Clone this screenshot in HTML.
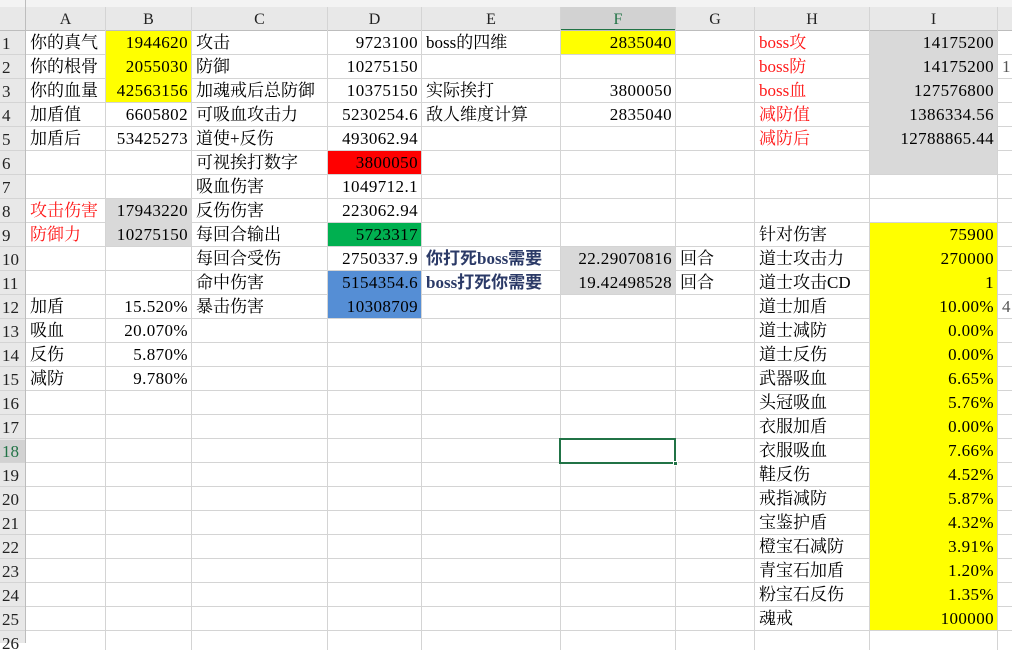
<!DOCTYPE html>
<html><head><meta charset="utf-8"><style>
body{margin:0;width:1012px;height:643px;overflow:hidden;background:#fff;position:relative;font-family:"Liberation Serif","Noto Serif CJK SC",serif;font-size:17px;color:#000}
div{position:absolute;box-sizing:border-box}
.h{background:#d4d4d4;height:1px;left:0;width:1012px}
.v{background:#d4d4d4;width:1px;top:7px;height:643px}
.c{height:23px;line-height:24px;padding:0 4px;white-space:nowrap}
.r{text-align:right;letter-spacing:0.4px;padding-right:3px}
.red{color:#ff1a1a}
.b{font-weight:bold;color:#2b3a67;font-family:"Liberation Serif","Noto Sans CJK SC",serif}
.ch{top:7px;height:23px;line-height:26px;text-align:center;font-size:16px;color:#222}
.rn{left:0;width:25px;height:24px;line-height:26px;padding-left:2px;font-size:17px;color:#222}
</style></head><body>
<div style="left:0;top:0;width:1012px;height:7px;background:#f3f3f3"></div>
<div style="left:0;top:7px;width:1012px;height:24px;background:#e8e8e8"></div>
<div style="left:0;top:7px;width:25px;height:636px;background:#e8e8e8"></div>
<div style="left:560px;top:7px;width:115px;height:24px;background:#d2d2d2;border-bottom:2px solid #217346"></div>
<div style="left:0;top:440px;width:25px;height:23px;background:#d2d2d2"></div>
<!-- grid -->
<div class="h" style="top:30px;background:#bdbdbd"></div>
<div class="h" style="top:54px"></div><div class="h" style="top:78px"></div><div class="h" style="top:102px"></div><div class="h" style="top:126px"></div><div class="h" style="top:150px"></div><div class="h" style="top:174px"></div><div class="h" style="top:198px"></div><div class="h" style="top:222px"></div><div class="h" style="top:246px"></div><div class="h" style="top:270px"></div><div class="h" style="top:294px"></div><div class="h" style="top:318px"></div><div class="h" style="top:342px"></div><div class="h" style="top:366px"></div><div class="h" style="top:390px"></div><div class="h" style="top:414px"></div><div class="h" style="top:438px"></div><div class="h" style="top:462px"></div><div class="h" style="top:486px"></div><div class="h" style="top:510px"></div><div class="h" style="top:534px"></div><div class="h" style="top:558px"></div><div class="h" style="top:582px"></div><div class="h" style="top:606px"></div><div class="h" style="top:630px"></div>
<div class="v" style="left:25px;background:#bdbdbd;top:0"></div>
<div class="v" style="left:105px"></div><div class="v" style="left:191px"></div><div class="v" style="left:327px"></div><div class="v" style="left:421px"></div><div class="v" style="left:560px"></div><div class="v" style="left:675px"></div><div class="v" style="left:754px"></div><div class="v" style="left:869px"></div><div class="v" style="left:997px"></div>
<!-- fills -->
<div style="left:106px;top:31px;width:85px;height:71px;background:#ffff00"></div>
<div style="left:561px;top:31px;width:114px;height:23px;background:#ffff00"></div>
<div style="left:870px;top:31px;width:127px;height:143px;background:#d9d9d9"></div>
<div style="left:106px;top:199px;width:85px;height:47px;background:#d9d9d9"></div>
<div style="left:328px;top:151px;width:93px;height:23px;background:#ff0000"></div>
<div style="left:328px;top:223px;width:93px;height:23px;background:#00b050"></div>
<div style="left:328px;top:271px;width:93px;height:47px;background:#558ed5"></div>
<div style="left:561px;top:247px;width:114px;height:47px;background:#d9d9d9"></div>
<div style="left:870px;top:223px;width:127px;height:407px;background:#ffff00"></div>
<!-- headers -->
<div class="ch" style="left:26px;width:79px">A</div><div class="ch" style="left:106px;width:85px">B</div><div class="ch" style="left:192px;width:135px">C</div><div class="ch" style="left:328px;width:93px">D</div><div class="ch" style="left:422px;width:138px">E</div><div class="ch" style="left:561px;width:114px;color:#217346">F</div><div class="ch" style="left:676px;width:78px">G</div><div class="ch" style="left:755px;width:114px">H</div><div class="ch" style="left:870px;width:127px">I</div>
<div class="rn" style="top:31px">1</div><div class="rn" style="top:55px">2</div><div class="rn" style="top:79px">3</div><div class="rn" style="top:103px">4</div><div class="rn" style="top:127px">5</div><div class="rn" style="top:151px">6</div><div class="rn" style="top:175px">7</div><div class="rn" style="top:199px">8</div><div class="rn" style="top:223px">9</div><div class="rn" style="top:247px">10</div><div class="rn" style="top:271px">11</div><div class="rn" style="top:295px">12</div><div class="rn" style="top:319px">13</div><div class="rn" style="top:343px">14</div><div class="rn" style="top:367px">15</div><div class="rn" style="top:391px">16</div><div class="rn" style="top:415px">17</div><div class="rn" style="top:439px;color:#217346">18</div><div class="rn" style="top:463px">19</div><div class="rn" style="top:487px">20</div><div class="rn" style="top:511px">21</div><div class="rn" style="top:535px">22</div><div class="rn" style="top:559px">23</div><div class="rn" style="top:583px">24</div><div class="rn" style="top:607px">25</div><div class="rn" style="top:631px">26</div>
<!-- A -->
<div class="c" style="left:26px;top:31px">你的真气</div><div class="c" style="left:26px;top:55px">你的根骨</div><div class="c" style="left:26px;top:79px">你的血量</div><div class="c" style="left:26px;top:103px">加盾值</div><div class="c" style="left:26px;top:127px">加盾后</div><div class="c red" style="left:26px;top:199px">攻击伤害</div><div class="c red" style="left:26px;top:223px">防御力</div><div class="c" style="left:26px;top:295px">加盾</div><div class="c" style="left:26px;top:319px">吸血</div><div class="c" style="left:26px;top:343px">反伤</div><div class="c" style="left:26px;top:367px">减防</div>
<!-- B -->
<div class="c r" style="left:106px;width:85px;top:31px">1944620</div><div class="c r" style="left:106px;width:85px;top:55px">2055030</div><div class="c r" style="left:96px;width:95px;top:79px">42563156</div><div class="c r" style="left:106px;width:85px;top:103px">6605802</div><div class="c r" style="left:96px;width:95px;top:127px">53425273</div><div class="c r" style="left:96px;width:95px;top:199px">17943220</div><div class="c r" style="left:96px;width:95px;top:223px">10275150</div><div class="c r" style="left:106px;width:85px;top:295px">15.520%</div><div class="c r" style="left:106px;width:85px;top:319px">20.070%</div><div class="c r" style="left:106px;width:85px;top:343px">5.870%</div><div class="c r" style="left:106px;width:85px;top:367px">9.780%</div>
<!-- C -->
<div class="c" style="left:192px;top:31px">攻击</div><div class="c" style="left:192px;top:55px">防御</div><div class="c" style="left:192px;top:79px">加魂戒后总防御</div><div class="c" style="left:192px;top:103px">可吸血攻击力</div><div class="c" style="left:192px;top:127px">道使+反伤</div><div class="c" style="left:192px;top:151px">可视挨打数字</div><div class="c" style="left:192px;top:175px">吸血伤害</div><div class="c" style="left:192px;top:199px">反伤伤害</div><div class="c" style="left:192px;top:223px">每回合输出</div><div class="c" style="left:192px;top:247px">每回合受伤</div><div class="c" style="left:192px;top:271px">命中伤害</div><div class="c" style="left:192px;top:295px">暴击伤害</div>
<!-- D -->
<div class="c r" style="left:328px;width:93px;top:31px">9723100</div><div class="c r" style="left:328px;width:93px;top:55px">10275150</div><div class="c r" style="left:328px;width:93px;top:79px">10375150</div><div class="c r" style="left:318px;width:103px;top:103px">5230254.6</div><div class="c r" style="left:318px;width:103px;top:127px">493062.94</div><div class="c r" style="left:328px;width:93px;top:151px">3800050</div><div class="c r" style="left:318px;width:103px;top:175px">1049712.1</div><div class="c r" style="left:318px;width:103px;top:199px">223062.94</div><div class="c r" style="left:328px;width:93px;top:223px">5723317</div><div class="c r" style="left:318px;width:103px;top:247px">2750337.9</div><div class="c r" style="left:318px;width:103px;top:271px">5154354.6</div><div class="c r" style="left:328px;width:93px;top:295px">10308709</div>
<!-- E -->
<div class="c" style="left:422px;top:31px">boss的四维</div><div class="c" style="left:422px;top:79px">实际挨打</div><div class="c" style="left:422px;top:103px">敌人维度计算</div><div class="c b" style="left:422px;top:247px">你打死boss需要</div><div class="c b" style="left:422px;top:271px">boss打死你需要</div>
<!-- F -->
<div class="c r" style="left:561px;width:114px;top:31px">2835040</div><div class="c r" style="left:561px;width:114px;top:79px">3800050</div><div class="c r" style="left:561px;width:114px;top:103px">2835040</div><div class="c r" style="left:551px;width:124px;top:247px">22.29070816</div><div class="c r" style="left:551px;width:124px;top:271px">19.42498528</div>
<!-- G -->
<div class="c" style="left:676px;top:247px">回合</div><div class="c" style="left:676px;top:271px">回合</div>
<!-- H -->
<div class="c red" style="left:755px;top:31px">boss攻</div><div class="c red" style="left:755px;top:55px">boss防</div><div class="c red" style="left:755px;top:79px">boss血</div><div class="c red" style="left:755px;top:103px">减防值</div><div class="c red" style="left:755px;top:127px">减防后</div>
<div class="c" style="left:755px;top:223px">针对伤害</div><div class="c" style="left:755px;top:247px">道士攻击力</div><div class="c" style="left:755px;top:271px">道士攻击CD</div><div class="c" style="left:755px;top:295px">道士加盾</div><div class="c" style="left:755px;top:319px">道士减防</div><div class="c" style="left:755px;top:343px">道士反伤</div><div class="c" style="left:755px;top:367px">武器吸血</div><div class="c" style="left:755px;top:391px">头冠吸血</div><div class="c" style="left:755px;top:415px">衣服加盾</div><div class="c" style="left:755px;top:439px">衣服吸血</div><div class="c" style="left:755px;top:463px">鞋反伤</div><div class="c" style="left:755px;top:487px">戒指减防</div><div class="c" style="left:755px;top:511px">宝鉴护盾</div><div class="c" style="left:755px;top:535px">橙宝石减防</div><div class="c" style="left:755px;top:559px">青宝石加盾</div><div class="c" style="left:755px;top:583px">粉宝石反伤</div><div class="c" style="left:755px;top:607px">魂戒</div>
<!-- I -->
<div class="c r" style="left:860px;width:137px;top:31px">14175200</div><div class="c r" style="left:860px;width:137px;top:55px">14175200</div><div class="c r" style="left:860px;width:137px;top:79px">127576800</div><div class="c r" style="left:860px;width:137px;top:103px">1386334.56</div><div class="c r" style="left:860px;width:137px;top:127px">12788865.44</div>
<div class="c r" style="left:870px;width:127px;top:223px">75900</div><div class="c r" style="left:870px;width:127px;top:247px">270000</div><div class="c r" style="left:870px;width:127px;top:271px">1</div><div class="c r" style="left:870px;width:127px;top:295px">10.00%</div><div class="c r" style="left:870px;width:127px;top:319px">0.00%</div><div class="c r" style="left:870px;width:127px;top:343px">0.00%</div><div class="c r" style="left:870px;width:127px;top:367px">6.65%</div><div class="c r" style="left:870px;width:127px;top:391px">5.76%</div><div class="c r" style="left:870px;width:127px;top:415px">0.00%</div><div class="c r" style="left:870px;width:127px;top:439px">7.66%</div><div class="c r" style="left:870px;width:127px;top:463px">4.52%</div><div class="c r" style="left:870px;width:127px;top:487px">5.87%</div><div class="c r" style="left:870px;width:127px;top:511px">4.32%</div><div class="c r" style="left:870px;width:127px;top:535px">3.91%</div><div class="c r" style="left:870px;width:127px;top:559px">1.20%</div><div class="c r" style="left:870px;width:127px;top:583px">1.35%</div><div class="c r" style="left:870px;width:127px;top:607px">100000</div>
<div class="c" style="left:1002px;top:55px;padding:0;color:#555">1</div><div class="c" style="left:1002px;top:295px;padding:0;color:#555">4</div>
<!-- selection -->
<div style="left:559px;top:438px;width:117px;height:26px;border:2px solid #217346"></div>
<div style="left:673px;top:461px;width:5px;height:5px;background:#217346;border:1px solid #fff"></div>
</body></html>
